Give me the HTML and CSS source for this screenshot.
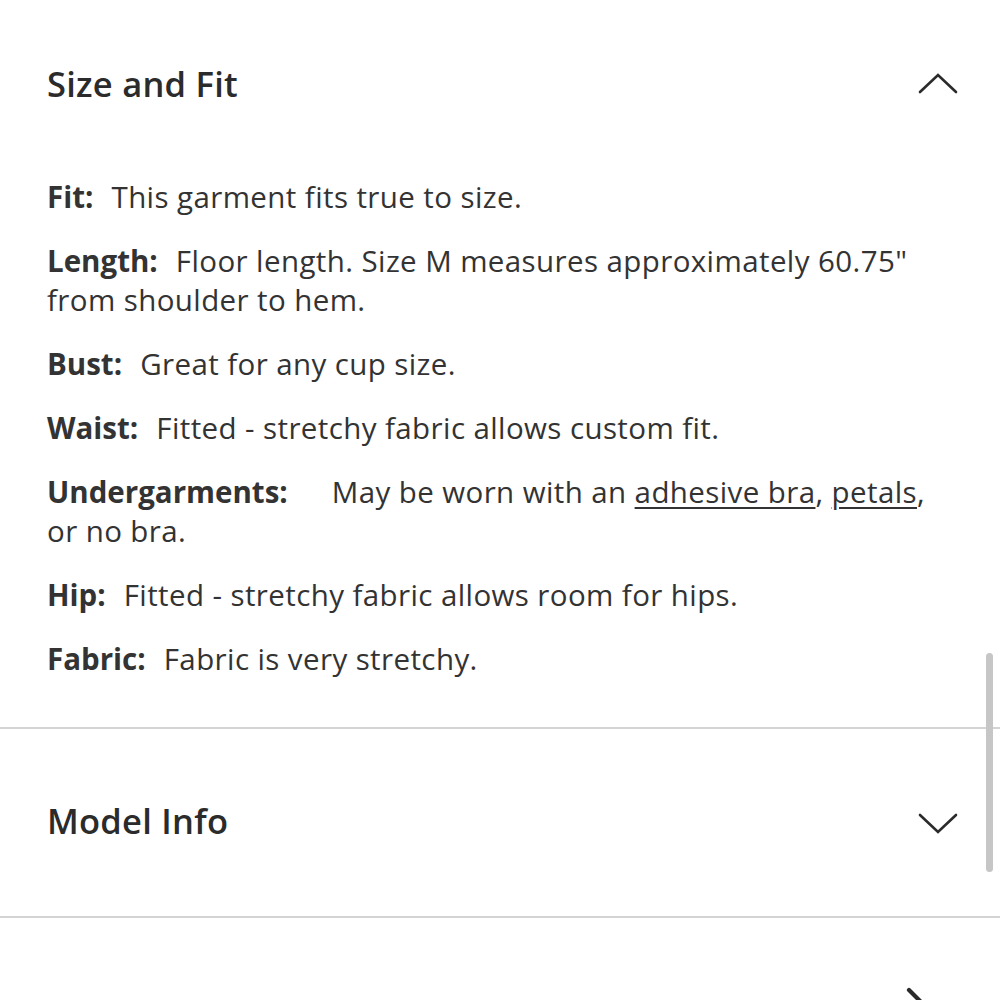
FILE: index.html
```html
<!DOCTYPE html>
<html lang="en">
<head>
<meta charset="utf-8">
<title>Size and Fit</title>
<link rel="stylesheet" href="styles.css">
</head>
<body>
<div class="page">
  <section class="acc acc-open">
    <div class="acc-head">
      <h2 class="acc-title">Size and Fit</h2>
      <svg class="chev" width="40" height="24" viewBox="0 0 40 24" aria-hidden="true"><polyline points="2,20 20,3 38,20" fill="none" stroke="#2b2b2b" stroke-width="2.6" stroke-linecap="round" stroke-linejoin="miter"/></svg>
    </div>
    <div class="acc-body">
      <p class="item"><span class="lbl">Fit:</span> This garment fits true to size.</p>
      <p class="item"><span class="lbl">Length:</span> Floor length. Size M measures approximately 60.75" from shoulder to hem.</p>
      <p class="item"><span class="lbl">Bust:</span> Great for any cup size.</p>
      <p class="item"><span class="lbl">Waist:</span> Fitted - stretchy fabric allows custom fit.</p>
      <p class="item"><span class="lbl lbl-wide">Undergarments:</span> May be worn with an <a class="lnk" href="#">adhesive bra</a>, <a class="lnk" href="#">petals</a>, or no bra.</p>
      <p class="item"><span class="lbl">Hip:</span> Fitted - stretchy fabric allows room for hips.</p>
      <p class="item"><span class="lbl">Fabric:</span> Fabric is very stretchy.</p>
    </div>
  </section>
  <section class="acc acc-closed">
    <div class="acc-head acc-head-closed">
      <h2 class="acc-title">Model Info</h2>
      <svg class="chev chev-down" width="40" height="24" viewBox="0 0 40 24" aria-hidden="true"><polyline points="2,4 20,21 38,4" fill="none" stroke="#2b2b2b" stroke-width="2.6" stroke-linecap="round" stroke-linejoin="miter"/></svg>
    </div>
  </section>
  <section class="acc acc-next">
    <div class="acc-head acc-head-next">
      <h2 class="acc-title acc-title-hidden">Reviews</h2>
      <svg class="chev-right" width="26" height="42" viewBox="0 0 26 42" aria-hidden="true"><polyline points="5,4 22,21 5,38" fill="none" stroke="#2b2b2b" stroke-width="4.2" stroke-linecap="round" stroke-linejoin="miter"/></svg>
    </div>
  </section>
  <div class="scroll-thumb"></div>
</div>
</body>
</html>
```

FILE: styles.css
```css
html, body {
  margin: 0;
  padding: 0;
  background: #ffffff;
  overflow: hidden;
}

.page {
  position: relative;
  width: 1000px;
  font-family: "Open Sans", "Liberation Sans", sans-serif;
  color: #333333;
}

.acc {
  border-bottom: 2px solid #d4d4d4;
}

.acc-next {
  border-bottom: none;
}

.acc-head {
  display: flex;
  align-items: center;
  justify-content: space-between;
  padding: 64px 42px 0 47px;
}

.acc-head-closed {
  height: 187px;
  padding-top: 0;
  padding-bottom: 0;
  box-sizing: border-box;
}

.acc-head-closed .acc-title {
  margin-top: -4px;
}

.chev-down {
  margin-top: 0;
}

.acc-head-next {
  align-items: flex-start;
  padding: 68px 70px 0 47px;
  height: 120px;
}

.acc-title {
  margin: 0;
  font-size: 34.5px;
  line-height: 40px;
  font-weight: 600;
  color: #2b2b2b;
  letter-spacing: 0.25px;
}

.acc-title-hidden {
  visibility: hidden;
}

.acc-body {
  padding: 73px 47px 49px 47px;
}

.item {
  margin: 0 0 25px 0;
  font-size: 29.5px;
  line-height: 39px;
  color: #333333;
  letter-spacing: 0.4px;
}

.item:last-child {
  margin-bottom: 0;
}

.lbl {
  font-weight: 700;
  color: #333333;
  letter-spacing: 0;
  margin-right: 10px;
}

.lbl-wide {
  margin-right: 36px;
}

.lnk {
  color: #333333;
  text-decoration: underline;
  text-decoration-thickness: 1.5px;
  text-underline-offset: 4px;
}

.scroll-thumb {
  position: absolute;
  left: 986px;
  top: 653px;
  width: 6.5px;
  height: 219px;
  border-radius: 4px;
  background: #c6c6c6;
}
```
